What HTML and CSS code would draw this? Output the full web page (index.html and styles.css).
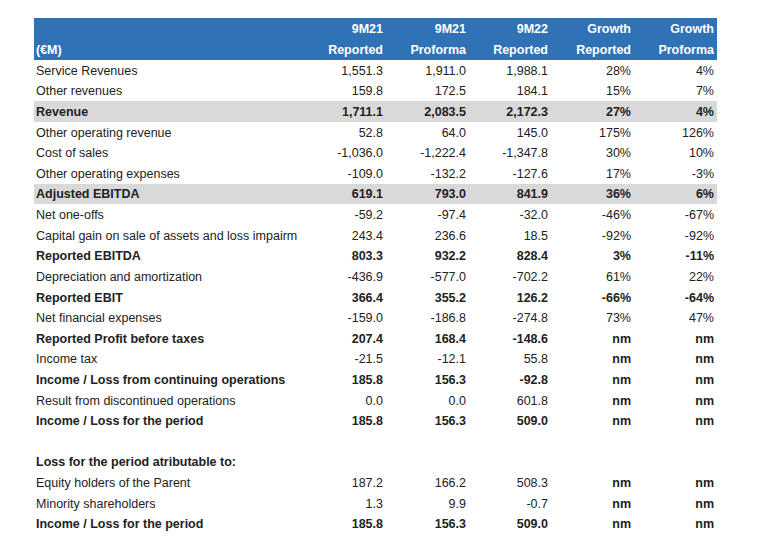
FILE: index.html
```html
<!DOCTYPE html>
<html>
<head>
<meta charset="utf-8">
<link rel="stylesheet" href="styles.css">
</head>
<body>
<table class="pl">
<colgroup>
<col class="c-label"><col class="c-num"><col class="c-num"><col class="c-num3"><col class="c-num"><col class="c-num">
</colgroup>
<thead>
<tr class="h1"><th class="lbl"></th><th>9M21</th><th>9M21</th><th>9M22</th><th>Growth</th><th>Growth</th></tr>
<tr class="h2"><th class="lbl">(€M)</th><th>Reported</th><th>Proforma</th><th>Reported</th><th>Reported</th><th>Proforma</th></tr>
</thead>
<tbody>
<tr><td class="lbl">Service Revenues</td><td>1,551.3</td><td>1,911.0</td><td>1,988.1</td><td>28%</td><td>4%</td></tr>
<tr><td class="lbl">Other revenues</td><td>159.8</td><td>172.5</td><td>184.1</td><td>15%</td><td>7%</td></tr>
<tr class="b hl"><td class="lbl">Revenue</td><td>1,711.1</td><td>2,083.5</td><td>2,172.3</td><td>27%</td><td>4%</td></tr>
<tr><td class="lbl">Other operating revenue</td><td>52.8</td><td>64.0</td><td>145.0</td><td>175%</td><td>126%</td></tr>
<tr><td class="lbl">Cost of sales</td><td>-1,036.0</td><td>-1,222.4</td><td>-1,347.8</td><td>30%</td><td>10%</td></tr>
<tr><td class="lbl">Other operating expenses</td><td>-109.0</td><td>-132.2</td><td>-127.6</td><td>17%</td><td>-3%</td></tr>
<tr class="b hl"><td class="lbl">Adjusted EBITDA</td><td>619.1</td><td>793.0</td><td>841.9</td><td>36%</td><td>6%</td></tr>
<tr><td class="lbl">Net one-offs</td><td>-59.2</td><td>-97.4</td><td>-32.0</td><td>-46%</td><td>-67%</td></tr>
<tr><td class="lbl">Capital gain on sale of assets and loss impairm</td><td>243.4</td><td>236.6</td><td>18.5</td><td>-92%</td><td>-92%</td></tr>
<tr class="b"><td class="lbl">Reported EBITDA</td><td>803.3</td><td>932.2</td><td>828.4</td><td>3%</td><td>-11%</td></tr>
<tr><td class="lbl">Depreciation and amortization</td><td>-436.9</td><td>-577.0</td><td>-702.2</td><td>61%</td><td>22%</td></tr>
<tr class="b"><td class="lbl">Reported EBIT</td><td>366.4</td><td>355.2</td><td>126.2</td><td>-66%</td><td>-64%</td></tr>
<tr><td class="lbl">Net financial expenses</td><td>-159.0</td><td>-186.8</td><td>-274.8</td><td>73%</td><td>47%</td></tr>
<tr class="b"><td class="lbl">Reported Profit before taxes</td><td>207.4</td><td>168.4</td><td>-148.6</td><td>nm</td><td>nm</td></tr>
<tr><td class="lbl">Income tax</td><td>-21.5</td><td>-12.1</td><td>55.8</td><td class="bb">nm</td><td class="bb">nm</td></tr>
<tr class="b"><td class="lbl">Income / Loss from continuing operations</td><td>185.8</td><td>156.3</td><td>-92.8</td><td>nm</td><td>nm</td></tr>
<tr><td class="lbl">Result from discontinued operations</td><td>0.0</td><td>0.0</td><td>601.8</td><td class="bb">nm</td><td class="bb">nm</td></tr>
<tr class="b"><td class="lbl">Income / Loss for the period</td><td>185.8</td><td>156.3</td><td>509.0</td><td>nm</td><td>nm</td></tr>
<tr><td class="lbl"></td><td></td><td></td><td></td><td></td><td></td></tr>
<tr class="b"><td class="lbl">Loss for the period atributable to:</td><td></td><td></td><td></td><td></td><td></td></tr>
<tr><td class="lbl">Equity holders of the Parent</td><td>187.2</td><td>166.2</td><td>508.3</td><td class="bb">nm</td><td class="bb">nm</td></tr>
<tr><td class="lbl">Minority shareholders</td><td>1.3</td><td>9.9</td><td>-0.7</td><td class="bb">nm</td><td class="bb">nm</td></tr>
<tr class="b"><td class="lbl">Income / Loss for the period</td><td>185.8</td><td>156.3</td><td>509.0</td><td>nm</td><td>nm</td></tr>
</tbody>
</table>
</body>
</html>
```

FILE: styles.css
```css
html, body {
  margin: 0;
  padding: 0;
  background: #ffffff;
}
body {
  padding: 18px 0 0 34px;
  font-family: "Liberation Sans", Arial, sans-serif;
  font-size: 12.5px;
  color: #222222;
}
.pl {
  border-collapse: collapse;
  table-layout: fixed;
  width: 683px;
}
.c-label { width: 269px; }
.c-num { width: 83px; }
.c-num3 { width: 82px; }
.pl th, .pl td {
  padding: 0 3px 0 0;
  text-align: right;
  white-space: nowrap;
  overflow: hidden;
  line-height: 14px;
}
.pl thead th {
  background: #2f72b5;
  color: #ffffff;
  font-weight: bold;
  height: 21px;
}
.pl td {
  height: 20.62px;
  padding-top: 1px;
  box-sizing: border-box;
}
.pl .lbl {
  text-align: left;
  padding-left: 2px;
  padding-right: 0;
}
.b td { font-weight: bold; }
.bb { font-weight: bold; }
.hl td { background: #d9d9d9; }
```
